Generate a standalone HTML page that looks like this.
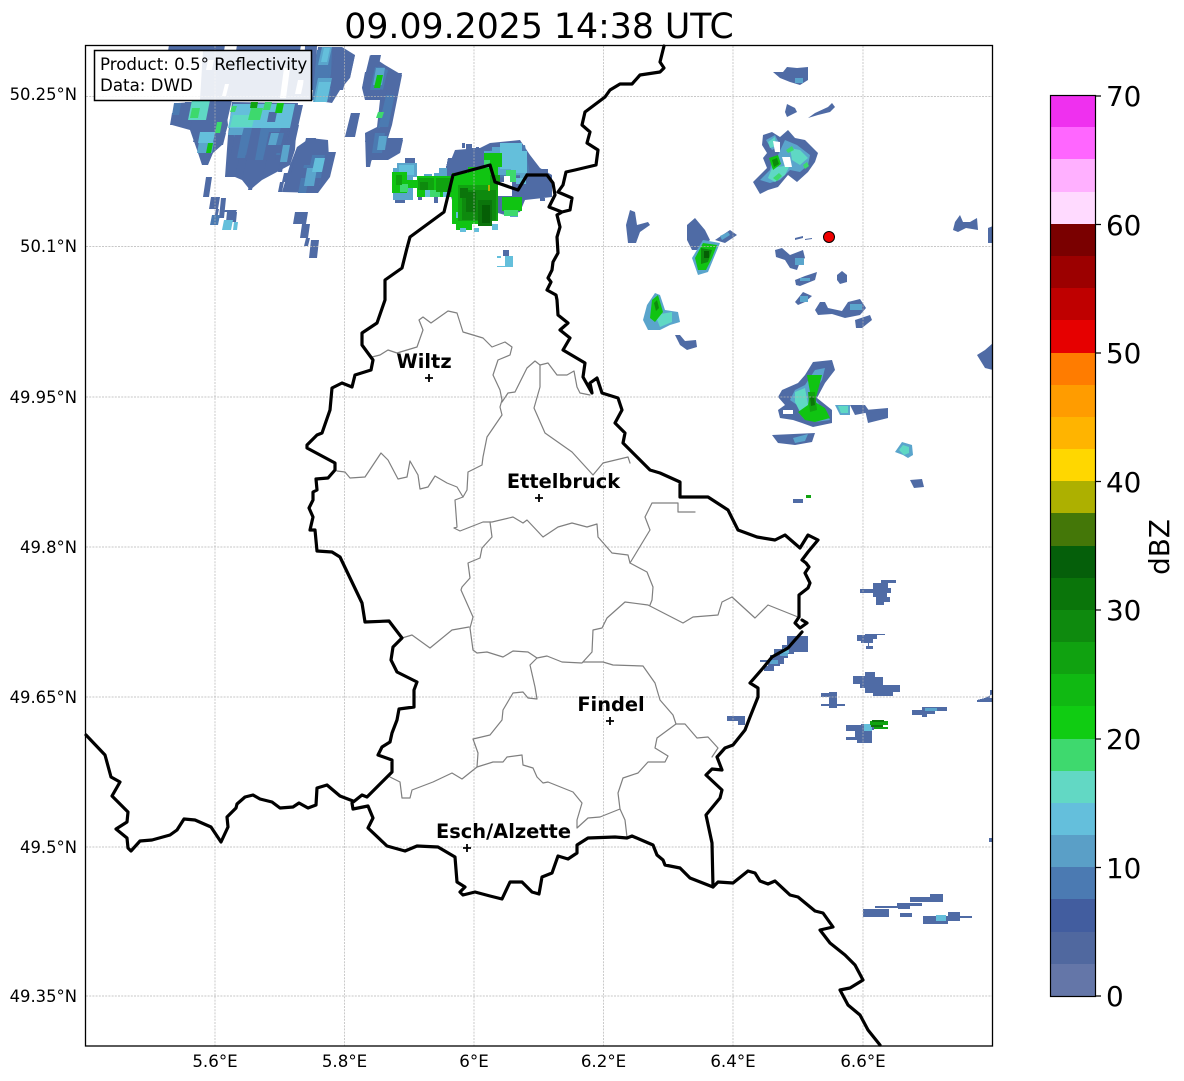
<!DOCTYPE html>
<html><head><meta charset="utf-8"><style>
html,body{margin:0;padding:0;background:#fff}
svg{display:block}
text{font-family:"DejaVu Sans","Liberation Sans",sans-serif;fill:#000}
</style></head><body>
<svg width="1184" height="1081" viewBox="0 0 1184 1081" xmlns="http://www.w3.org/2000/svg">
<rect width="1184" height="1081" fill="#fff"/>
<text x="539" y="38" font-size="34.7" text-anchor="middle">09.09.2025 14:38 UTC</text>

<!-- radar NW backing -->
<path fill="#4f6ba5" d="M172 125L178 103 225 100 228 125 222 145 213 153 208 165 202 165 197 150 190 130zM225 177L228 135 232 102 298 103 295 150 290 165 262 180 250 190 242 180 235 177zM282 192L290 165 297 147 310 138 328 140 330 177 318 193zM312 100L318 47 342 47 355 55 350 78 340 90 332 103zM362 88L370 55 385 65 402 75 398 95 392 125 388 138 403 140 400 153 388 160 372 160 366 167 365 133 377 127 380 100 365 100zM345 137L351 113 360 113 355 137zM445 175L455 150 480 148 490 143 520 140 530 155 540 168 552 175 552 197 525 200 520 212 505 215 452 200z"/>
<path fill="#4b7ab1" d="M232 130L240 125 285 125 280 155 240 155zM298 175L308 150 325 150 320 185 300 190zM316 95L322 50 332 50 330 100zM372 88L378 66 388 70 384 90zM378 128L386 96 394 98 388 128zM375 152L378 134 388 135 385 152zM490 150L525 145 530 175 495 178z"/>
<!-- radar NW beams -->
<g>
<path fill="#4f6ba5" d="M168 51l1-6h56l-1 6zM236 51l1-6h64l-1 6zM200 100l3-50h112l-4 50z"/>
<path fill="#fff" d="M222 96l3-12h4l-3 12zM280 98l4-30h6l-4 30zM295 94l3-14h6l-3 14zM206 70l2-10h6l-2 10z"/>
<path fill="#4f6ba5" d="M170 125l2-12h5l-2 12zM180 125l5-23h8l-5 23zM190 130l2-10h21l-2 10zM212 122l5-22h15l-5 22zM193 142l3-12h9l-3 12zM213 145l3-12h10l-3 12zM202 165l2-12h5l-2 12zM230 158l5-23h7l-5 23zM245 160l7-32h10l-7 32zM263 160l6-28h12l-6 28zM275 153l7-31h8l-7 31zM285 152l6-27h8l-6 27zM290 127l5-22h8l-5 22zM225 177l5-22h10l-5 22zM242 180l5-22h20l-5 22zM248 190l2-10h4l-2 10zM278 172l2-10h4l-2 10zM292 168l5-21h10l-5 21zM300 165l6-27h10l-6 27zM308 155l3-15h17l-3 15zM322 177l6-25h8l-6 25zM282 182l2-9h10l-2 9zM287 192l6-27h11l-6 27zM312 193l3-15h6l-3 15zM278 192l2-10h4l-2 10zM298 193l5-25h15l-5 25zM328 88l7-33h10l-7 33zM335 57l2-10h5l-2 10zM338 78l5-23h12l-5 23zM337 90l3-12h6l-3 12zM362 88l3-16h10l-3 16zM368 70l3-15h10l-3 15zM365 100l2-10h13l-2 10zM383 90l4-17h15l-4 17zM385 97l2-9h10l-2 9zM365 142l2-9h7l-2 9zM372 160l3-15h16l-3 15zM385 153l3-15h15l-3 15zM366 167l2-9h4l-2 9zM377 138l3-11h10l-3 11zM345 137l6-24h9l-6 24zM303 90l2-44h12l-2 44zM203 197l3-20h6l-3 20zM209 209l2-12h9l-2 12zM219 218l2-20h5l-2 20zM214 219l2-10h3l-2 10zM224 212l1-2h12l-1 2zM226 222l1-10h10l-1 10zM293 224l2-12h13l-2 12zM300 238l2-14h8l-2 14zM304 246l2-8h4l-2 8zM309 258l2-18h8l-2 18z"/>
<path fill="#4b7ab1" d="M172 115l2-12h7l-2 12zM237 158l6-31h8l-6 31zM255 160l7-38h8l-7 38zM276 145l3-12h5l-3 12zM298 193l3-15h8l-3 15zM310 178l5-23h10l-5 23zM312 100l5-50h14l-5 50zM370 90l5-23h10l-5 23zM380 125l6-30h8l-6 30zM372 153l3-20h10l-3 20zM210 225l2-10h8l-2 10z"/>
<path fill="#5aa5cc" d="M228 135l2-8h14l-2 8zM268 145l3-12h8l-3 12zM280 162l3-17h7l-3 17zM318 65l4-18h10l-4 18zM313 102l5-24h14l-5 24zM304 186l3-18h10l-3 18zM197 153l2-11h15l-2 11zM373 85l3-17h9l-3 17zM377 150l2-14h8l-2 14z"/>
<path fill="#64bfdb" d="M198 143l2-11h15l-2 11zM228 128l5-24h62l-5 24zM312 172l3-14h10l-3 14zM315 102l4-20h12l-4 20zM321 62l3-14h6l-3 14zM222 230l2-10h9l-2 10zM233 230l1-8h4l-1 8z"/>
<path fill="#5fd8c4" d="M188 120l4-20h18l-4 20zM230 127l3-12h22l-3 12z"/>
<path fill="#4f6ba5" d="M267 122l2-10h8l-2 10z"/>
<path fill="#3dd96d" d="M190 118l2-10h8l-2 10zM248 120l3-12h12l-3 12zM263 110l2-8h7l-2 8zM215 133l2-11h5l-2 11zM230 112l2-6h5l-2 6zM376 118l2-6h6l-2 6z"/>
<path fill="#10c412" d="M275 113l2-10h7l-2 10zM206 153l2-10h5l-2 10zM374 88l3-13h6l-3 13z"/>
<path fill="#10a310" d="M250 108l1-6h7l-1 6z"/>

<!-- central storm -->
<g shape-rendering="crispEdges">
<path fill="#4f6ba5" d="M445 172l3-14h8v-8h10v-6h6v4h8v14h10v10zM405 165v-7h10v7zM525 197v-24h15v-4h8v6h4v20h-8v3zM512 209v-12h8v8h-2v4zM395 200h10v3h-10zM540 198h5v3h-5zM418 190h4v10h-4zM434 195h4v8h-4zM462 143h3v5h-3zM476 147h3v5h-3z"/>
<path fill="#5aa5cc" d="M393 200v-32h4v-5h20v14h-4v23zM484 175v-24h8v-4h30v8h4v24h-6v-4zM434 178v-5h5v-5h8v10zM424 178v-4h8v4zM510 217v-7h8v7zM453 178h12v-8h6v8z"/>
<path fill="#64bfdb" d="M399 175v-10h15v10zM500 169v-26h22v8h5v22h-16v-4zM516 178h10v6h-10zM505 266v-10h-8v10zM497 267v-9h4v-2h4v-6h4v6h4v11z"/>
<path fill="#4f6ba5" d="M503 256v-6h6v6z"/>
<path fill="#10c412" d="M392 193v-21h15v21zM407 188h10v-8h-10zM417 197v-21h35v21zM452 224v-51h16v-6h30v50h-12v7h-14v6h-16v-6zM484 167v-14h18v14zM502 211v-14h20v14z"/>
<path fill="#64bfdb" d="M425 190h6v7h-6zM443 190h6v7h-6zM460 228h6v4h-6zM474 228h5v4h-5zM492 224h6v6h-6zM456 212h4v6h-4zM503 185h6v4h-6z"/>
<path fill="#3dd96d" d="M400 184h8v8h-8zM430 190h10v7h-10zM506 170h10v12h-10zM504 210h14v6h-14zM484 160h6v8h-6z"/>
<path fill="#10a310" d="M418 178h16v12h-16zM436 178h16v14h-16zM458 185h40v36h-40zM490 175h10v10h-10zM396 175h6v10h-6z"/>
<path fill="#0e8a0e" d="M462 190h34v30h-34zM420 182h8v8h-8z"/>
<path fill="#0b750b" d="M466 192h10v20h-10zM478 200h14v26h-14zM460 188h8v10h-8z"/>
<path fill="#055f05" d="M482 205h8v18h-8z"/>
<path fill="#adb000" d="M488 185h2v6h-2z"/>
<path fill="#fff" d="M498 182h14v14h-14zM504 176h6v6h-6z"/>
</g>

<!-- NE blobs -->
<path fill="#4f6ba5" d="M753 182L760 175 767 168 763 158 767 153 762 145 763 135 772 132 780 137 788 130 795 138 805 140 818 153 815 162 808 172 797 182 788 175 778 187 768 190 760 194z"/>
<path fill="#5aa5cc" d="M760 180L770 170 772 160 778 155 785 140 797 145 810 155 808 165 800 172 790 170 780 180 770 183zM766 140L775 135 780 145 772 150z"/>
<path fill="#5fd8c4" d="M790 148L800 150 808 158 800 165 792 160zM772 168L790 165 785 175 775 182 768 178zM768 142L775 137 776 146 770 148z"/>
<path fill="#3dd96d" d="M773 178l6-5 3 3-5 5zM803 165l4-3 2 4-4 3zM786 150l6-4 2 4-6 3z"/>
<path fill="#10c412" d="M769 158L778 155 781 164 773 170z"/>
<path fill="#0b8a0b" d="M772 160l5-2 2 6-5 3z"/>
<path fill="#fff" d="M773 141L780 142 780 152 775 152zM782 157L790 157 792 167 785 167z"/>
<path fill="#4f6ba5" d="M773 72L783 72 787 67 797 68 808 67 808 80 800 85 790 82 780 78zM787 104L795 108 797 112 787 117 785 112zM808 118L815 113 828 107 832 103 835 107 830 112 818 115zM630 210L635 212 637 225 648 222 650 225 640 232 636 243 628 243 626 225zM955 222L960 215 963 222 970 222 977 218 978 230 966 228 958 232 953 230zM988 228L993 226V243H988zM795 238l8-2v2l-8 2zM805 239l7-1v1l-7 1zM775 250L782 248 790 255 803 250 805 258 800 262 797 270 790 268 785 260 776 257zM795 280L805 276 817 272 815 280 800 286 796 285zM795 302L803 292 812 296 805 302 798 305zM837 275L842 271 847 275 847 282 840 284 837 280zM815 310L820 302 825 302 828 308 842 311 848 302 860 299 866 308 860 315 845 318 832 314 818 315zM855 320L870 315 872 320 862 328 856 328zM675 335L680 335 685 341 696 340 697 347 687 350 680 345zM977 355L985 350 993 343V370L985 368zM910 480L922 479 924 487 914 488zM793 499h10v4h-10z"/>
<path fill="#5aa5cc" d="M795 78h8v5h-8zM795 258h9v7h-9zM800 278h10v3h-10zM800 296h8v6h-8zM850 304h12v6h-12z"/>
<path fill="#4f6ba5" d="M687 225L695 218 705 230 710 240 700 250 692 250 687 240zM715 240L730 230 737 235 725 243z"/>
<path fill="#5aa5cc" d="M703 240L720 243 715 255 708 272 698 275 692 258zM720 236l8-4 2 3-8 5z"/>
<path fill="#10c412" d="M703 243L717 245 712 258 706 270 698 270 695 258z"/>
<path fill="#0e8a0e" d="M701 248L712 250 708 262 701 264z"/>
<path fill="#055f05" d="M704 251h5v7h-5z"/>
<path fill="#5aa5cc" d="M643 320L647 305 655 293 660 295 665 310 678 312 680 322 670 325 660 330 648 330z"/>
<path fill="#5fd8c4" d="M655 315L672 312 672 322 660 327z"/>
<path fill="#10c412" d="M652 300L658 295 663 312 655 322 650 318z"/>
<path fill="#0e8a0e" d="M654 303l3-3 2 8-3 3z"/>
<path fill="#4f6ba5" d="M813 362L832 360 835 370 825 383 817 398 832 410 832 423 813 427 802 423 793 420 780 418 778 410 785 405 778 397 782 390 798 383 805 375z"/>
<path fill="#fff" d="M783 410h10v4h-10z"/>
<path fill="#5aa5cc" d="M805 385L815 370 825 368 822 380 812 395 825 412 830 420 815 422 803 418 797 405 790 400 795 390z"/>
<path fill="#5fd8c4" d="M795 392L805 388 808 405 800 412 795 402z"/>
<path fill="#10c412" d="M807 375L822 375 818 390 815 402 825 408 830 418 815 422 805 420 798 412 808 405 810 392z"/>
<path fill="#10a310" d="M808 392L815 392 817 410 810 412z"/>
<path fill="#0b750b" d="M810 397l4-1 1 9-4 1z"/>
<path fill="#5aa5cc" d="M835 405L850 405 850 415 840 415z"/>
<path fill="#5fd8c4" d="M838 406L848 406 848 413 841 413z"/>
<path fill="#4f6ba5" d="M850 405L865 405 870 412 855 415zM865 410L888 408 888 418 868 423zM772 435L815 433 812 442 795 445 778 443z"/>
<path fill="#5aa5cc" d="M793 438L808 434 805 441 795 443z"/>
<path fill="#5aa5cc" d="M895 452L902 442 912 445 913 455 908 458 903 455z"/>
<path fill="#5fd8c4" d="M899 450l4-5 6 2v6l-5 2z"/>
<path fill="#10a310" d="M806 495h5v3h-5z"/>

<!-- lower east -->
<g shape-rendering="crispEdges">
<path fill="#4f6ba5" d="M860 589h13v-6h8v-3h15v3h-8v5h3v5h-4v4h3v5h-6v3h-8v-8h-3v-4h-13zM857 635h8v-1h20v-2h-0v3h-8v4h-4v4h-4v3h4v3h-7v-3h2v-3h-7v-2h-4zM853 676h12v-4h10v5h8v8h17v7h-7v4h-20v-3h-8v-5h-5v-4h-7zM821 693h8v-1h8v12h8v2h-8v2h-8v-2h-8v-2h8v-7h-8zM727 716h18v9h-7v-4h-11zM846 725h15v-1h13v6h-2v13h-15v-3h-11v-3h9v-6h-9zM787 636h21v16h-14v2h-6v4h-4v6h-4v2h-6v5h-10v-5h4v-4h-8v-2h10v-5h4v-6h8v-4h5zM912 710h10v-3h25v4h-12v3h-8v3h-5v-2h-10zM977 700l8-2 8-4v-4h-3v8h3v4h-16zM989 838h4v4h-4zM910 897h20v-3h13v8h-33zM875 906h22v-3h25v3h-12v3h-12v-1h-23zM863 909h26v8h-26zM900 913h12v4h-12zM923 916h25v-4h12v4h12v2h-12v3h-12v3h-25z"/>
<path fill="#5aa5cc" d="M780 650h8v6h-8zM925 708h12v3h-12zM770 660h8v4h-8z"/>
<path fill="#64bfdb" d="M936 915h10v6h-10zM864 724h8v7h-8zM783 648h6v5h-6z"/>
<path fill="#10a310" d="M870 721h18v4h-18zM874 727h14v2h-14z"/>
<path fill="#0b750b" d="M872 720h12v2h-12zM871 725h12v2h-12z"/>
</g>
</g>

<!-- grid -->
<g stroke="#b5b5b5" stroke-width="0.7" stroke-dasharray="2 1.2" fill="none">
<path d="M215 46V1046M344.500 46V1046M474 46V1046M603.500 46V1046M733 46V1046M863 46V1046"/>
<path d="M86 96.500H992M86 246.500H992M86 397H992M86 547H992M86 697H992M86 847H992M86 996H992"/>
</g>

<!-- regional boundaries -->
<g fill="none" stroke="#7f7f7f" stroke-width="1.200" stroke-linejoin="round" stroke-linecap="round">
<path d="M372 357L380 355 388 350 397 353 417 347 423 330 419 320 423 317 431 323 448 311 457 313 463 332 483 338 492 347 505 342 512 347 510 355 498 360 493 375 500 390 502 400 500 407 502 415 487 437 483 457 482 465 468 472 467 490 463 497 455 500 457 527 454 528 460 531 483 522 492 522 513 517 523 523 527 520 543 537 558 527 572 523 587 527 597 524 598 537 612 553 628 555 630 563"/>
<path d="M337 471L345 472 350 478 365 477 381 453 388 460 398 479 407 477 410 461 418 475 420 489 428 487 435 476 447 483 457 487 463 497"/>
<path d="M502 402L508 393 515 392 527 368 535 361 540 365 548 363 557 375 567 375 574 371 577 387 580 393 590 395"/>
<path d="M540 365V387L534 408 545 433 572 452 593 475 603 463 628 457 630 463"/>
<path d="M490 522L492 537 482 548 480 558 468 563 470 578 462 587 461 590 473 617 470 628 473 650 477 653 487 652 503 657 513 651 528 652 537 658 547 656 562 662 582 663 592 652 593 630 602 628 607 618 625 602 648 605 683 623 693 617 718 615 722 602 732 597 755 618 768 605 798 617"/>
<path d="M678 503H652L645 517 650 530 630 563 647 572 653 587 652 600 650 605M678 503V512H695"/>
<path d="M402 638L412 635 430 648 452 630 469 627"/>
<path d="M537 658L530 665 535 687 537 699 528 698 523 692 513 693 503 710 502 720 490 735 473 739 478 753 477 767 462 779 452 773 433 782 412 790 410 798 402 798 400 782 390 777"/>
<path d="M477 767L493 762 503 762 507 757 522 755 523 765 533 768 537 777 543 783 548 782 573 792 582 803 577 820 577 828 588 818 600 817 620 809 625 820 627 837"/>
<path d="M620 809L618 793 623 778 638 773 648 762 665 762 668 756 655 748 657 738 676 724 685 724 697 738 708 737 718 748 712 757"/>
<path d="M583 662L603 662 613 665 643 666 655 683 660 700 673 715 676 724"/>
</g>

<!-- national border -->
<g fill="none" stroke="#000" stroke-width="3.200" stroke-linejoin="round" stroke-linecap="round">
<path d="M664 46L660 62 664 68 660 72 640 75 632 84 620 84 610 90 605 97 585 112 582 125 590 132 587 143 598 150 596 165 575 170 566 172 563 185 558 192 572 198 570 210 562 212 549 207 555 195 553 183 547 175 527 175M562 212L557 215 560 227 557 237 558 253 553 262 552 270 548 278 551 282 547 290 556 295 557 300 558 315 568 323 560 330 570 338 563 350 585 363 583 377 592 393 590 383 597 378 602 393 618 398 622 410 615 423 625 433 623 443 637 457 650 470 660 473 680 482 680 497 708 497 728 510 738 530 757 537 775 540 785 535 800 548 808 535 818 540 808 552 802 560 806 563 809 567 805 573 810 583 808 588 799 595 799 617 795 623 800 628 807 623 802 620M802 632L788 648 772 657 763 668 750 683 758 688 758 697 750 717 745 730 733 745 725 748 717 757 722 770 712 769 706 775 722 790 720 798 706 815 712 843 713 887 690 878 680 868 665 865 663 860 657 855 653 845 632 836 627 838 615 837 588 838 577 845 577 853 568 859 558 856 552 873 542 877 539 894 532 892 522 882 510 882 502 899 490 896 475 892 463 895 460 892 465 887 457 882 455 857 438 847 417 846 405 851 387 846 368 828 373 818 368 806 353 809 352 803 362 795 367 797 392 772 392 760 378 755 382 747 390 742 392 733 397 720 399 709 414 707 414 690 417 682 397 672 391 660 393 647 402 638 389 621 365 622 362 603 340 557 332 552 317 551 315 530 310 530 313 517 309 508 313 500 313 492 317 490 316 479 328 478 335 470 335 463 307 448 307 445 317 435 322 433 330 410 332 388 342 383 352 387 355 375 371 370 373 360 362 345 362 333 377 323 385 300 385 280 402 268 407 248 410 237 444 212 453 175 490 165 495 182 518 190 527 175"/>
<path d="M713 887L718 882 733 883 748 871 755 873 760 881 768 884 775 881 790 895 798 897 815 911 823 913 833 927 820 930 830 943 845 955 855 965 863 980 850 988 840 990 848 1005 860 1015 868 1030 880 1045"/>
<path d="M86 735L105 755 111 777 120 782 112 796 128 812 127 822 116 829 127 838 128 848 131 851 140 841 152 840 170 835 177 830 184 819 195 820 211 827 221 842 228 827 227 817 236 808 237 804 245 797 253 795 260 799 272 802 280 808 293 807 299 803 308 808 316 805 317 788 327 785 340 796 353 801"/>
</g>

<!-- markers -->
<g stroke="#000" stroke-width="1.800" fill="none">
<path d="M425 378h8M429 374v8M535 498h8M539 494v8M606 721h8M610 717v8M463 848h8M467 844v8"/>
</g>
<g font-size="19.400" font-weight="bold" text-anchor="middle">
<text x="424" y="368">Wiltz</text>
<text x="563.500" y="488">Ettelbruck</text>
<text x="611" y="711">Findel</text>
<text x="503.500" y="838">Esch/Alzette</text>
</g>
<circle cx="829" cy="237" r="5.500" fill="#f00000" stroke="#000" stroke-width="1"/>

<!-- text box -->
<rect x="94.500" y="50.500" width="217" height="50" fill="#fff" fill-opacity="0.88" stroke="#000" stroke-width="1.500"/>
<text x="100" y="70" font-size="16.670">Product: 0.5° Reflectivity</text>
<text x="100" y="91" font-size="16.670">Data: DWD</text>

<rect x="85.500" y="45.500" width="907" height="1000.500" fill="none" stroke="#000" stroke-width="1.300"/>

<!-- axis labels -->
<g font-size="16.400" text-anchor="end">
<text x="77" y="100">50.25°N</text>
<text x="77" y="252">50.1°N</text>
<text x="77" y="403">49.95°N</text>
<text x="77" y="553">49.8°N</text>
<text x="77" y="703">49.65°N</text>
<text x="77" y="853">49.5°N</text>
<text x="77" y="1002">49.35°N</text>
</g>
<g font-size="16.670" text-anchor="middle">
<text x="215" y="1067">5.6°E</text>
<text x="344.500" y="1067">5.8°E</text>
<text x="474" y="1067">6°E</text>
<text x="603.500" y="1067">6.2°E</text>
<text x="733" y="1067">6.4°E</text>
<text x="863" y="1067">6.6°E</text>
</g>

<!-- colorbar -->
<g shape-rendering="crispEdges">
<rect x="1051" y="964" width="45" height="32" fill="#6476a8"/>
<rect x="1051" y="932" width="45" height="32" fill="#50689f"/>
<rect x="1051" y="899" width="45" height="33" fill="#425d9f"/>
<rect x="1051" y="867" width="45" height="32" fill="#4b7ab2"/>
<rect x="1051" y="835" width="45" height="32" fill="#5a9fc7"/>
<rect x="1051" y="803" width="45" height="32" fill="#64bfdc"/>
<rect x="1051" y="771" width="45" height="32" fill="#62d8c4"/>
<rect x="1051" y="739" width="45" height="32" fill="#3ed96e"/>
<rect x="1051" y="706" width="45" height="33" fill="#10cc12"/>
<rect x="1051" y="674" width="45" height="32" fill="#10b912"/>
<rect x="1051" y="642" width="45" height="32" fill="#10a210"/>
<rect x="1051" y="610" width="45" height="32" fill="#0e8a0e"/>
<rect x="1051" y="578" width="45" height="32" fill="#0a750a"/>
<rect x="1051" y="546" width="45" height="32" fill="#055f0a"/>
<rect x="1051" y="513" width="45" height="33" fill="#447708"/>
<rect x="1051" y="481" width="45" height="32" fill="#adb000"/>
<rect x="1051" y="449" width="45" height="32" fill="#ffd700"/>
<rect x="1051" y="417" width="45" height="32" fill="#ffb400"/>
<rect x="1051" y="385" width="45" height="32" fill="#ff9c00"/>
<rect x="1051" y="353" width="45" height="32" fill="#ff7c00"/>
<rect x="1051" y="320" width="45" height="33" fill="#e60000"/>
<rect x="1051" y="288" width="45" height="32" fill="#bf0000"/>
<rect x="1051" y="256" width="45" height="32" fill="#9c0000"/>
<rect x="1051" y="224" width="45" height="32" fill="#7a0000"/>
<rect x="1051" y="192" width="45" height="32" fill="#ffdaff"/>
<rect x="1051" y="159" width="45" height="33" fill="#ffb0ff"/>
<rect x="1051" y="127" width="45" height="32" fill="#ff66ff"/>
<rect x="1051" y="95" width="45" height="32" fill="#ef30ef"/>
</g>
<rect x="1050.500" y="95.500" width="45" height="901" fill="none" stroke="#000" stroke-width="1.200"/>
<path d="M1096 96h5M1096 224.500h5M1096 353h5M1096 481.500h5M1096 610h5M1096 739h5M1096 867.500h5M1096 996h5" stroke="#000" stroke-width="1.200"/>
<g font-size="27.800">
<text x="1106" y="106">70</text>
<text x="1106" y="235">60</text>
<text x="1106" y="363">50</text>
<text x="1106" y="492">40</text>
<text x="1106" y="620">30</text>
<text x="1106" y="749">20</text>
<text x="1106" y="878">10</text>
<text x="1106" y="1006">0</text>
</g>
<text transform="translate(1169 547) rotate(-90)" font-size="27.800" text-anchor="middle">dBZ</text>
</svg>
</body></html>
